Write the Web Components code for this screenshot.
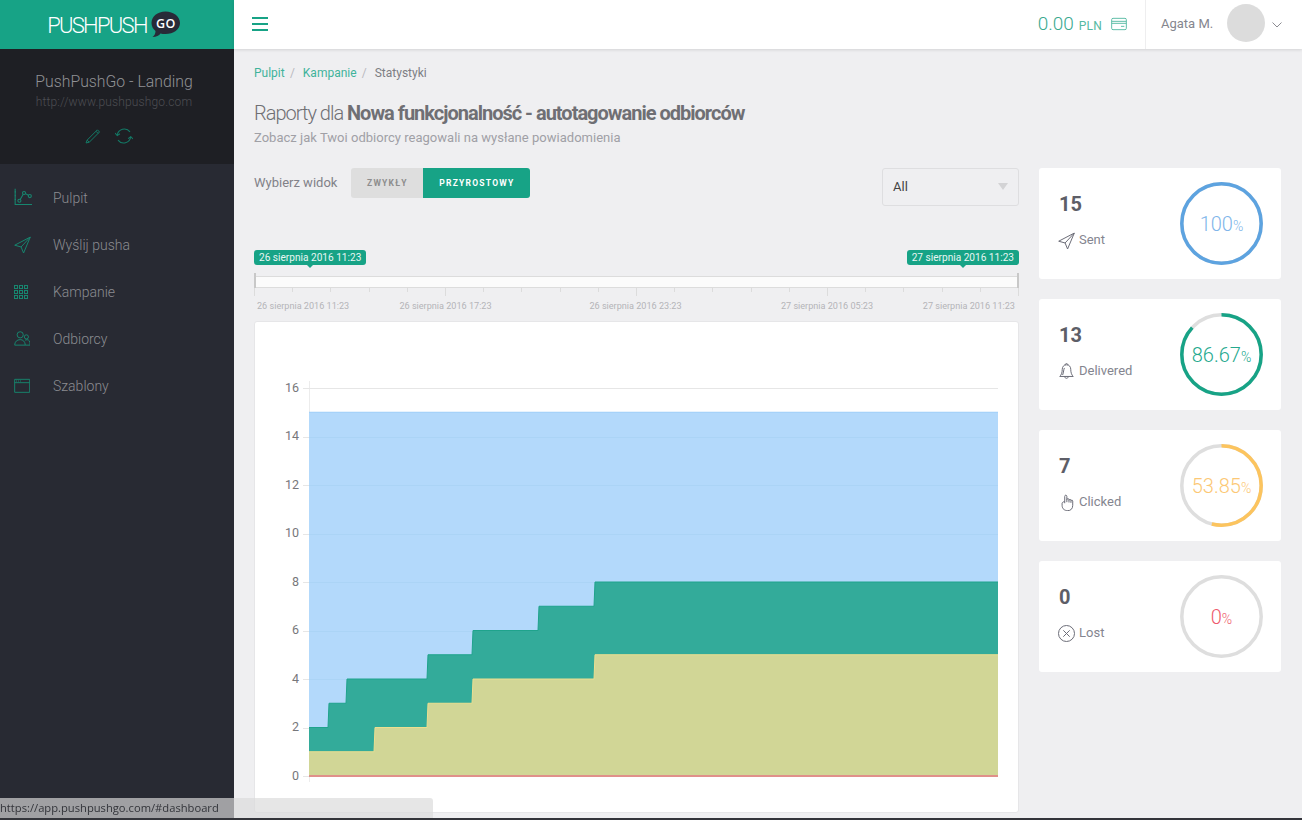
<!DOCTYPE html>
<html lang="pl">
<head>
<meta charset="utf-8">
<title>PushPushGo</title>
<style>
  html, body { margin: 0; height: 100%; background: #efeff1; overflow: hidden; font-family: Roboto, "Liberation Sans", sans-serif; }
</style>
</head>
<body>
<pp-app></pp-app>

<script>
// Icons, all drawn with thin strokes on a 24 box.
const ICONS = {
    chart: '<path d="M1.500 1v20.500h22"/><path d="M1 5h1.500M1 10h1.500M1 15h1.500"/><circle cx="7" cy="16.500" r="2"/><circle cx="13" cy="6.500" r="2"/><circle cx="20.500" cy="10.500" r="2"/><path d="M8 14.800l4-6.600M14.900 7.300l3.700 2.200"/>',
    send: '<path d="M23 1.500L1 13l9 2.500 3.500 8.500z"/><path d="M23 1.500L10 15.500"/>',
    users: '<circle cx="9" cy="7" r="4.500"/><circle cx="18" cy="10" r="3"/><path d="M1 22c0-5 3.500-8 8-8 4 0 7 2.500 7.500 8z"/><path d="M16 15c1-1 5-1.500 6 .5 1 1.500 1.500 4 1.500 6.500h-7"/>',
    browser: '<path d="M1 2h22.500v19.500H1zM1 7h22.500"/><path d="M3 4.500h1.500M6 4.500h1.500M9 4.500h1.500"/>',
    pencil: '<path d="M3 18.500L17.500 4l3 3L6 21.500l-4.500 1z"/><path d="M15.500 6l3 3M3 18.500l3 3"/>',
    refresh: '<path d="M3 11a9.500 9.500 0 0 1 17-4.500"/><path d="M21 13a9.500 9.500 0 0 1-17 4.500"/><path d="M0 8l3 3.500L6.500 9M24 16l-3-3-3.500 2.500"/>',
    wallet: '<rect x="1" y="3.500" width="22" height="17" rx="2"/><path d="M1 8h22M1 11h22M15 15.500h5"/>',
    bell: '<path d="M12 2.500c-4 0-6 3-6 6.500 0 5-1.500 8-3.500 10h19c-2-2-3.500-5-3.500-10 0-3.500-2-6.500-6-6.500z"/><path d="M10 3c0-3 4-3 4 0M9.500 19c0 3.500 5 3.500 5 0M9 7c-1 2-1 6-2.500 10"/>',
    hand: '<path d="M9.500 13V3.500c0-2.500 3-2.500 3 0v8"/><path d="M12.500 8c0-2 3-2 3 0v4M15.500 9c0-2 2.800-2 2.800 0v3.500M18.300 10c0-1.800 2.500-1.800 2.500 0v6c0 5-3 7.500-7 7.500s-8-2-8-7.500v-3c0-1 2-2.500 3.700-2"/>',
    cross: '<circle cx="12" cy="12" r="11.300"/><path d="M7.500 7.500l9 9M16.500 7.500l-9 9"/>'
}

function icon(name, size) {
    // the grid is snapped on whole pixels so the small squares stay square.
    if (name == 'grid') {
        let cells = ''
        for (let y of [.5, 5.5, 10.5]) {
            for (let x of [.5, 5.5, 10.5]) cells += `<rect x="${x}" y="${y}" width="3" height="3"/>`
        }
        return `<svg width="14" height="14" viewBox="0 0 14 14" fill="none" stroke="currentColor">${cells}</svg>`
    }
    return `<svg width="${size}" height="${size}" viewBox="0 0 24 24" fill="none" stroke="currentColor" stroke-width="1.400">${ICONS[name]}</svg>`
}

/**
 * One link of the side menu.
 */
class NavItem extends HTMLElement {
    constructor() {
        super()
        this.attachShadow({ mode: 'open' })
        this.shadowRoot.innerHTML = `
        <style>
            :host { display: flex; align-items: center; height: 47px; padding-left: 14px; gap: 21px; color: #8b8c91; font-size: 14px; font-weight: 300; }
            #icon { display: flex; color: #17866f; width: 18px; }
            #icon svg { margin-left: -.5px; }
        </style>
        <span id="icon">${icon(this.getAttribute('icon'), this.getAttribute('size') || 17)}</span>
        <slot></slot>
        `
    }
}
customElements.define('pp-nav-item', NavItem)

/**
 * The left column, logo, project and menu.
 */
class Sidebar extends HTMLElement {
    constructor() {
        super()
        this.attachShadow({ mode: 'open' })
        this.shadowRoot.innerHTML = `
        <style>
            :host { display: block; width: 234px; flex: none; background: #282a33; }
            #logo { height: 49px; background: #17a386; display: flex; align-items: center; justify-content: center; padding-right: 6px; box-sizing: border-box; color: #fff; font-size: 22px; font-weight: 300; letter-spacing: -1.700px; gap: 4px; }
            #logo span { margin-top: 1px; }
            #project { height: 115px; box-sizing: border-box; background: #1e1f24; padding: 23px 6px 0 0; text-align: center; }
            #name { color: #909195; font-size: 15.800px; font-weight: 300; line-height: 20px; }
            #url { color: #4d4e53; font-size: 12px; font-weight: 300; line-height: 16px; margin-top: 2px; letter-spacing: .15px; }
            #tools { display: flex; justify-content: center; gap: 13px; margin-top: 17px; color: #137a66; padding-right: 10px; }
            nav { padding-top: 10px; }
        </style>
        <div id="logo">
            <span>PUSHPUSH</span>
            <svg width="30" height="27" viewBox="0 0 30 27">
                <path d="M14.500 .5C22.500 .5 29 5.500 29 12s-6.500 11-14.500 11c-2 0-3.500-.2-5-.6C8 24.500 5.500 26 1.500 26c2-1.500 3-3.500 3-6C2 18 .5 15 .5 12 .5 5.500 6.500 .5 14.500 .5z" fill="#282a38"/>
                <text x="15" y="17" text-anchor="middle" font-family="'Open Sans', Roboto, sans-serif" font-size="12.500" font-weight="600" fill="#fff" letter-spacing=".6">GO</text>
            </svg>
        </div>
        <div id="project">
            <div id="name">PushPushGo - Landing</div>
            <div id="url">http://www.pushpushgo.com</div>
            <div id="tools">${icon('pencil', 17)}${icon('refresh', 18)}</div>
        </div>
        <nav><slot></slot></nav>
        `
    }
}
customElements.define('pp-sidebar', Sidebar)

/**
 * The white bar on top with balance and user.
 */
class Topbar extends HTMLElement {
    constructor() {
        super()
        this.attachShadow({ mode: 'open' })
        this.shadowRoot.innerHTML = `
        <style>
            :host { display: flex; align-items: center; height: 49px; flex: none; background: #fff; box-shadow: 0 1px 3px rgba(0,0,0,.12); position: relative; }
            #burger { margin-left: 18px; width: 16px; height: 14px; margin-top: -2px; border-top: 2px solid #17a386; border-bottom: 2px solid #17a386; box-sizing: border-box; display: flex; align-items: center; }
            #burger i { display: block; width: 100%; height: 2px; background: #17a386; }
            #balance { margin-left: auto; display: flex; align-items: baseline; color: #3aa98f; font-weight: 300; font-size: 19px; height: 100%; padding-top: 12px; box-sizing: border-box; }
            #balance small { font-size: 12px; font-weight: 400; margin-left: 5px; color: #55b9a2; letter-spacing: .2px; }
            #balance svg { margin-left: 9px; color: #55b9a2; align-self: flex-start; margin-top: 4px; }
            #user { display: flex; align-items: center; height: 100%; margin-left: 18px; padding-left: 15px; border-left: 1px solid #eeeeef; color: #85868e; font-size: 13px; width: 157px; box-sizing: border-box; }
            #user > span:first-child { margin-top: -2px; }
            #avatar { width: 38px; height: 38px; border-radius: 50%; background: #dcdcdc; margin-left: 14px; margin-top: -3px; }
            #chevron { margin-left: 7px; display: flex; }
        </style>
        <div id="burger"><i></i></div>
        <div id="balance">0.00<small>PLN</small>${icon('wallet', 16)}</div>
        <div id="user">
            <span>Agata M.</span>
            <div id="avatar"></div>
            <span id="chevron"><svg width="10" height="6" viewBox="0 0 10 6" fill="none" stroke="#8c8c92"><path d="M.5 .5L5 5 9.500 .5"/></svg></span>
        </div>
        `
    }
}
customElements.define('pp-topbar', Topbar)

/**
 * Breadcrumb, title and subtitle.
 */
class PageHeader extends HTMLElement {
    constructor() {
        super()
        this.attachShadow({ mode: 'open' })
        this.shadowRoot.innerHTML = `
        <style>
            :host { display: block; padding-top: 1px; }
            #crumbs { font-size: 12px; line-height: 16px; color: #7d7e84; display: flex; }
            #crumbs a { color: #3fb39b; text-decoration: none; }
            #crumbs i { font-style: normal; color: #b9b9bf; margin: 0 8px 0 5.200px; }
            h1 { margin: 20px 0 0; font-size: 20px; line-height: 24px; font-weight: 300; color: #6f6f74; letter-spacing: -1px; }
            h1 b { font-weight: 700; letter-spacing: -1px; }
            p { margin: 4px 0 0; font-size: 13px; line-height: 18px; color: #a0a0a6; letter-spacing: .02px; }
        </style>
        <div id="crumbs"><a>Pulpit</a><i>/</i><a>Kampanie</a><i>/</i><span>Statystyki</span></div>
        <h1>Raporty dla <b>Nowa funkcjonalność - autotagowanie odbiorców</b></h1>
        <p>Zobacz jak Twoi odbiorcy reagowali na wysłane powiadomienia</p>
        `
    }
}
customElements.define('pp-page-header', PageHeader)

/**
 * View switch on the left, select on the right.
 */
class ViewBar extends HTMLElement {
    constructor() {
        super()
        this.attachShadow({ mode: 'open' })
        this.shadowRoot.innerHTML = `
        <style>
            :host { display: flex; align-items: flex-start; height: 38px; }
            #label { font-size: 13px; color: #818188; line-height: 30px; margin-right: 14px; }
            .btn { height: 30px; display: flex; align-items: center; justify-content: center; font-size: 8.500px; font-weight: 700; letter-spacing: 1.250px; }
            #plain { width: 72px; background: #dedede; color: #8d8d8d; border-radius: 3px 0 0 3px; }
            #active { width: 107px; background: #17a386; color: #fff; border-radius: 0 3px 3px 0; }
            #select { margin-left: auto; width: 137px; height: 38px; box-sizing: border-box; border: 1px solid #dedee0; border-radius: 3px; display: flex; align-items: center; padding: 0 10px 2px; font-size: 13px; color: #444; justify-content: space-between; }
            #select i { width: 0; height: 0; border: 5.500px solid transparent; border-top: 7px solid #d3d3d5; border-bottom: 0; }
        </style>
        <span id="label">Wybierz widok</span>
        <div id="plain" class="btn">ZWYKŁY</div>
        <div id="active" class="btn">PRZYROSTOWY</div>
        <div id="select"><span>All</span><i></i></div>
        `
    }
}
customElements.define('pp-view-bar', ViewBar)

/**
 * Green tag with a small arrow under it, used by the range slider.
 */
class RangeTag extends HTMLElement {
    constructor() {
        super()
        this.attachShadow({ mode: 'open' })
        this.shadowRoot.innerHTML = `
        <style>
            :host { display: block; position: relative; background: #17a386; color: #e8f6f3; font-size: 10.100px; line-height: 15px; height: 15px; padding: 0 5px; border-radius: 3px; white-space: nowrap; }
            :host::after { content: ""; position: absolute; left: 50%; bottom: -3px; margin-left: -3px; border: 3px solid transparent; border-top-color: #17a386; border-bottom: 0; }
        </style>
        <slot></slot>
        `
    }
}
customElements.define('pp-range-tag', RangeTag)

/**
 * Date range slider with its scale below.
 */
class RangeSlider extends HTMLElement {
    constructor() {
        super()
        this.attachShadow({ mode: 'open' })

        let ticks = ''
        for (let k = 0; k <= 20; k++) {
            let x = Math.round(k * 38.2) + .5
            ticks += `<path d="M${x} 0V${k % 5 == 0 ? 8 : 4}"/>`
        }
        let labels = [[3, 'start', '26 sierpnia 2016 11:23'], [191.5, 'middle', '26 sierpnia 2016 17:23'], [381.5, 'middle', '26 sierpnia 2016 23:23'], [573, 'middle', '27 sierpnia 2016 05:23'], [761, 'end', '27 sierpnia 2016 11:23']]
        let texts = labels.map(l => `<text x="${l[0]}" y="21" text-anchor="${l[1]}">${l[2]}</text>`).join('')

        this.shadowRoot.innerHTML = `
        <style>
            :host { display: block; }
            #tags { display: flex; justify-content: space-between; height: 26px; align-items: flex-start; }
            #track { height: 12px; box-sizing: border-box; background: #fbfbfb; border-top: 1px solid #dcdcdc; border-bottom: 1px solid #dcdcdc; position: relative; }
            #track i { position: absolute; top: -4px; width: 2px; height: 15px; background: #c8c8c8; }
            #track i:first-child { left: 0; }
            #track i:last-child { right: 0; }
            svg { display: block; }
            text { font-size: 9.100px; fill: #b4b4b8; stroke: none; }
            path { stroke: #dcdcdc; }
        </style>
        <div id="tags"><pp-range-tag>26 sierpnia 2016 11:23</pp-range-tag><pp-range-tag>27 sierpnia 2016 11:23</pp-range-tag></div>
        <div id="track"><i></i><i></i></div>
        <svg width="765" height="33">${ticks}${texts}</svg>
        `
    }
}
customElements.define('pp-range-slider', RangeSlider)

/**
 * The stacked area chart, the values are steps in time.
 */
class AreaChart extends HTMLElement {
    constructor() {
        super()
        this.attachShadow({ mode: 'open' })

        // Pixel scale of the plot inside the card.
        let X0 = 55, X1 = 744
        let Y = v => 455 - v * 24.25

        // Build a step line as [x, value] list.
        let stepLine = (steps) => {
            let d = `M${X0} ${Y(steps[0][1])}`
            for (let i = 1; i < steps.length; i++) {
                d += `L${steps[i][0]} ${Y(steps[i - 1][1])}L${steps[i][0] + 1} ${Y(steps[i][1])}`
            }
            return d + `L${X1} ${Y(steps[steps.length - 1][1])}`
        }

        let delivered = [[X0, 2], [74, 3], [92, 4], [173, 5], [218, 6], [284, 7], [340, 8]]
        let clicked = [[X0, 1], [120, 2], [173, 3], [218, 4], [340, 5]]
        let close = `L${X1} ${Y(0)}L${X0} ${Y(0)}Z`

        let grid = '', overlay = '', labels = ''
        for (let v = 0; v <= 16; v += 2) {
            let y = Math.round(Y(v)) + .5
            grid += `<path d="M49 ${y}H${X1}" stroke="#e6e6e6"/>`
            if (v < 16) overlay += `<path d="M${X0} ${y}H${X1}" stroke="#abd4f6"/>`
            labels += `<text x="45" y="${Y(v) + 3.500}" text-anchor="end">${v}</text>`
        }

        this.shadowRoot.innerHTML = `
        <style>
            :host { display: block; height: 492px; box-sizing: border-box; background: #fff; border: 1px solid #e6e6e8; border-radius: 3px; overflow: hidden; }
            svg { display: block; margin: -1px; }
            text { font-size: 12.500px; fill: #77777b; }
        </style>
        <svg width="765" height="492">
            <path d="M${X0 + .5} 60V461" stroke="#ececec"/>
            ${grid}
            <path d="M${X0} ${Y(15)}H${X1}V${Y(0)}H${X0}Z" fill="#b3d9fb"/>
            <path d="M${X0} ${Y(15)}H${X1}" stroke="#9ccdf7"/>
            ${overlay}
            <path d="${stepLine(delivered)}${close}" fill="#33ab9a"/>
            <path d="${stepLine(delivered)}" fill="none" stroke="#1fa38c"/>
            <path d="${stepLine(clicked)}${close}" fill="#d1d696"/>
            <path d="${stepLine(clicked)}" fill="none" stroke="#ecdf90"/>
            <path d="M${X0} ${Y(0)}H${X1}" stroke="#e0908a" stroke-width="2"/>
            ${labels}
        </svg>
        `
    }
}
customElements.define('pp-area-chart', AreaChart)

/**
 * A card with one figure and its percent ring.
 */
class StatCard extends HTMLElement {
    constructor() {
        super()
        this.attachShadow({ mode: 'open' })

        let percent = parseFloat(this.getAttribute('percent'))
        let color = this.getAttribute('color')
        let R = 39.7
        let length = 2 * Math.PI * R
        let arc = percent > 0 ? `<circle cx="41.500" cy="41.500" r="${R}" fill="none" stroke="${color}" stroke-width="3.500" stroke-dasharray="${length * percent / 100} ${length}" transform="rotate(-90 41.500 41.500)"/>` : ''

        this.shadowRoot.innerHTML = `
        <style>
            :host { display: flex; align-items: center; height: 111px; box-sizing: border-box; background: #fff; border-radius: 3px; padding: 0 18px 0 20px; }
            #figures { flex: 1; padding-bottom: 6px; }
            #value { font-size: 20px; font-weight: 700; line-height: 24px; color: #5d5e67; margin-bottom: 15px; }
            #label { display: flex; align-items: center; gap: 4px; font-size: 13px; line-height: 18px; color: #84858f; margin-left: -1px; }
            #label span { display: flex; color: #6a6b76; }
            #ring { display: grid; width: 83px; height: 83px; margin-left: -.5px; }
            #ring > * { grid-area: 1 / 1; }
            #percent { align-self: center; justify-self: center; color: ${this.getAttribute('text') || color}; font-size: 20px; font-weight: 300; }
            #percent small { font-size: 14px; }
        </style>
        <div id="figures">
            <div id="value">${this.getAttribute('value')}</div>
            <div id="label"><span>${icon(this.getAttribute('icon'), 17)}</span>${this.getAttribute('label')}</div>
        </div>
        <div id="ring">
            <svg width="83" height="83"><circle cx="41.500" cy="41.500" r="${R}" fill="none" stroke="#dedede" stroke-width="3.500"/>${arc}</svg>
            <div id="percent">${this.getAttribute('percent')}<small>%</small></div>
        </div>
        `
    }
}
customElements.define('pp-stat-card', StatCard)

/**
 * The browser link hint over the bottom left corner.
 */
class LinkHint extends HTMLElement {
    constructor() {
        super()
        this.attachShadow({ mode: 'open' })
        this.shadowRoot.innerHTML = `
        <style>
            :host { position: fixed; left: 0; bottom: 2px; width: 433px; height: 20px; box-sizing: border-box; background: rgba(218,218,218,.675); border-radius: 0 3px 0 0; color: #33343a; font: 11.200px/20px "Open Sans", "Noto Sans", sans-serif; white-space: nowrap; overflow: hidden; }
        </style>
        <span>https://app.pushpushgo.com/#dashboard</span>
        `
    }
}
customElements.define('pp-link-hint', LinkHint)

/**
 * The whole application view.
 */
class App extends HTMLElement {
    constructor() {
        super()
        this.attachShadow({ mode: 'open' })
        this.shadowRoot.innerHTML = `
        <style>
            :host { display: flex; height: 820px; overflow: hidden; position: relative; }
            #main { flex: 1; display: flex; flex-direction: column; min-width: 0; }
            #content { padding: 15px 21px 0 20px; }
            #columns { display: flex; gap: 20px; margin-top: 21px; align-items: flex-start; }
            #left { width: 765px; flex: none; }
            #right { flex: 1; display: flex; flex-direction: column; gap: 20px; }
            pp-range-slider { margin-top: 44px; }
            #edge { position: fixed; left: 0; right: 0; bottom: 0; height: 2px; background: #33343a; }
        </style>
        <pp-sidebar>
            <pp-nav-item icon="chart" size="18.500">Pulpit</pp-nav-item>
            <pp-nav-item icon="send">Wyślij pusha</pp-nav-item>
            <pp-nav-item icon="grid">Kampanie</pp-nav-item>
            <pp-nav-item icon="users" size="16.500">Odbiorcy</pp-nav-item>
            <pp-nav-item icon="browser" size="16">Szablony</pp-nav-item>
        </pp-sidebar>
        <div id="main">
            <pp-topbar></pp-topbar>
            <div id="content">
                <pp-page-header></pp-page-header>
                <div id="columns">
                    <div id="left">
                        <pp-view-bar></pp-view-bar>
                        <pp-range-slider></pp-range-slider>
                        <pp-area-chart></pp-area-chart>
                    </div>
                    <div id="right">
                        <pp-stat-card value="15" label="Sent" icon="send" percent="100" color="#5da3e0" text="#7fb6ea"></pp-stat-card>
                        <pp-stat-card value="13" label="Delivered" icon="bell" percent="86.67" color="#17a386" text="#25a98e"></pp-stat-card>
                        <pp-stat-card value="7" label="Clicked" icon="hand" percent="53.85" color="#fcc45e" text="#fcc875"></pp-stat-card>
                        <pp-stat-card value="0" label="Lost" icon="cross" percent="0" color="#dedede" text="#ee5a6c"></pp-stat-card>
                    </div>
                </div>
            </div>
        </div>
        <pp-link-hint></pp-link-hint>
        <div id="edge"></div>
        `
    }
}
customElements.define('pp-app', App)
</script>
</body>
</html>
